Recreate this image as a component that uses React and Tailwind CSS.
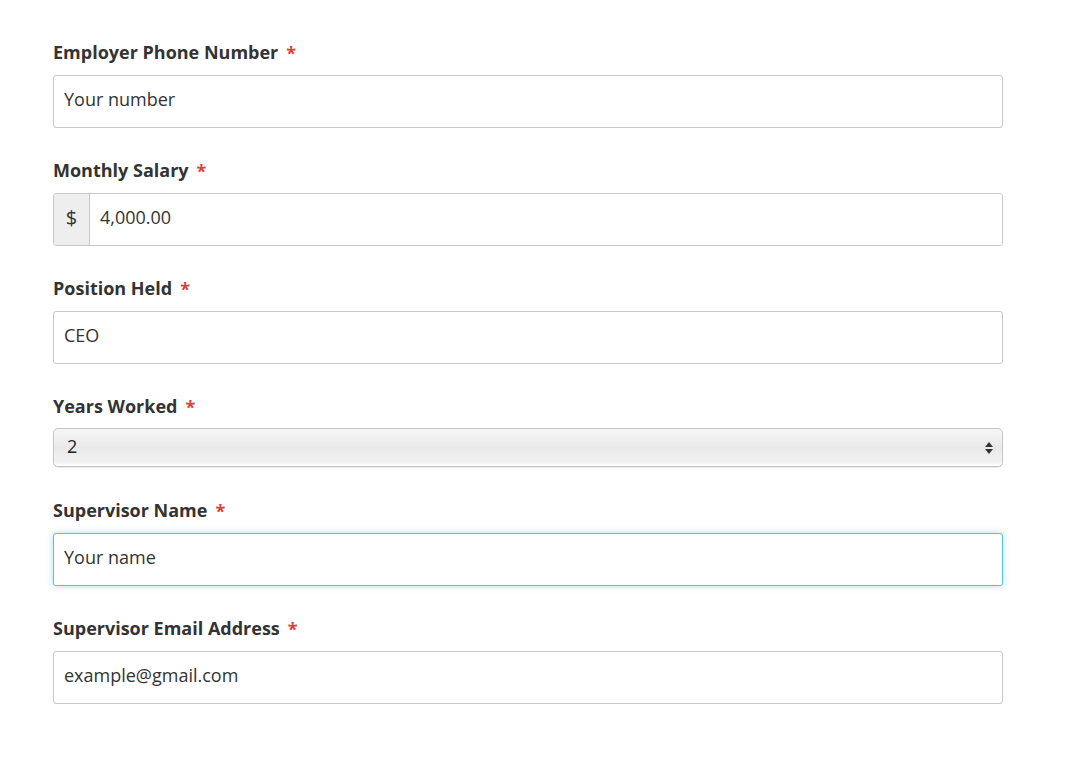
import React from "react";

const Label = ({ children }) => (
  <div className="h-6 flex items-center text-[18px] font-bold text-[#333] leading-6">
    {children}
    <span className="ml-2 text-[#d9413b] text-[18px] leading-none pt-[2px]">*</span>
  </div>
);

const Field = ({ label, children, last }) => (
  <div className={last ? "" : "mb-[30px]"}>
    <Label>{label}</Label>
    <div className="mt-[11px]">{children}</div>
  </div>
);

const Box = ({ children, focused }) => (
  <div
    className={`h-[53px] flex items-center px-[10px] pb-[4px] rounded-[3px] bg-white text-[18px] text-[#333] border ${
      focused
        ? "border-[#55c3e6] shadow-[0_0_6px_rgba(85,195,230,0.5)]"
        : "border-[#c8c8c8]"
    }`}
  >
    {children}
  </div>
);

export default function App() {
  return (
    <div
      className="min-h-screen bg-white pt-10 pl-[53px]"
      style={{ fontFamily: "'Open Sans', 'Noto Sans', sans-serif" }}
    >
      <div className="w-[950px]">
        <Field label="Employer Phone Number">
          <Box>Your number</Box>
        </Field>

        <Field label="Monthly Salary">
          <div className="h-[53px] flex rounded-[3px] border border-[#c8c8c8] overflow-hidden text-[18px] text-[#333]">
            <div className="w-9 flex items-center justify-center pb-[4px] bg-[#eeeeee] border-r border-[#c8c8c8] text-[20px]">
              $
            </div>
            <div className="flex-1 flex items-center px-[10px] pb-[4px] bg-white">4,000.00</div>
          </div>
        </Field>

        <Field label="Position Held">
          <Box>CEO</Box>
        </Field>

        <div className="mb-[31px]">
          <Label>Years Worked</Label>
          <div className="mt-[10px] h-[39px] flex items-center justify-between pl-[13px] pr-[8px] pb-[2px] rounded-[5px] border border-[#c4c4c4] bg-gradient-to-b from-[#f7f7f7] via-[#e9e9e9] to-[#f5f5f5] shadow-[inset_0_-2px_2px_rgba(255,255,255,0.9),0_1px_1px_rgba(0,0,0,0.08)] text-[18px] text-[#222]">
            <span>2</span>
            <svg width="10" height="14" viewBox="0 0 10 14" className="mt-[2px]">
              <path d="M5 1 L9 6 L1 6 Z" fill="#333" />
              <path d="M1 8 L9 8 L5 13 Z" fill="#333" />
            </svg>
          </div>
        </div>

        <Field label="Supervisor Name">
          <Box focused>Your name</Box>
        </Field>

        <Field label="Supervisor Email Address" last>
          <Box>example@gmail.com</Box>
        </Field>
      </div>
    </div>
  );
}
